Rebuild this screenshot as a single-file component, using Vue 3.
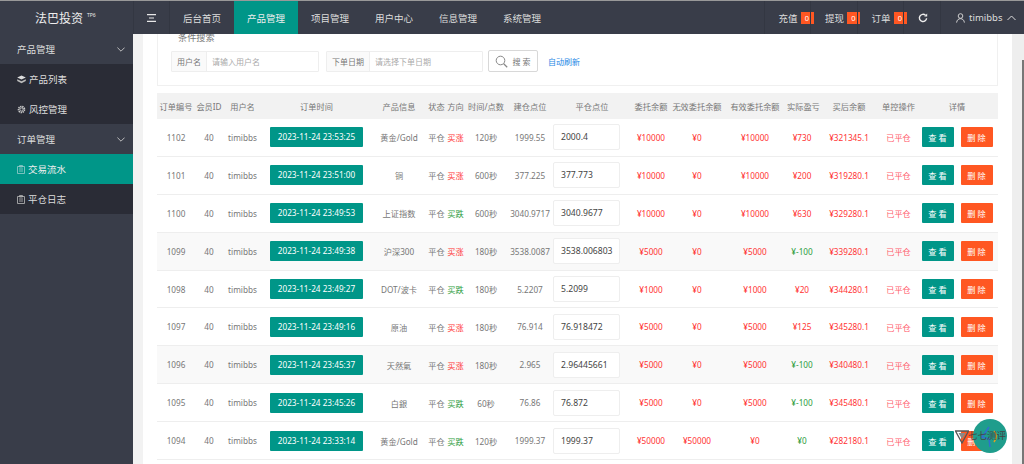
<script setup>
const rows = [
  { id: 1102, time: "2023-11-24 23:53:25", product: "黄金/Gold", dir: "买涨", dur: "120秒", open: "1999.55", close: "2000.4", entrust: "¥10000", invalid: "¥0", valid: "¥10000", profit: "¥730", after: "¥321345.1" },
  { id: 1101, time: "2023-11-24 23:51:00", product: "铜", dir: "买涨", dur: "600秒", open: "377.225", close: "377.773", entrust: "¥10000", invalid: "¥0", valid: "¥10000", profit: "¥200", after: "¥319280.1" },
  { id: 1100, time: "2023-11-24 23:49:53", product: "上证指数", dir: "买跌", dur: "600秒", open: "3040.9717", close: "3040.9677", entrust: "¥10000", invalid: "¥0", valid: "¥10000", profit: "¥630", after: "¥329280.1" },
  { id: 1099, time: "2023-11-24 23:49:38", product: "沪深300", dir: "买涨", dur: "180秒", open: "3538.0087", close: "3538.006803", entrust: "¥5000", invalid: "¥0", valid: "¥5000", profit: "¥-100", after: "¥339280.1", tint: true },
  { id: 1098, time: "2023-11-24 23:49:27", product: "DOT/波卡", dir: "买跌", dur: "180秒", open: "5.2207", close: "5.2099", entrust: "¥1000", invalid: "¥0", valid: "¥1000", profit: "¥20", after: "¥344280.1" },
  { id: 1097, time: "2023-11-24 23:49:16", product: "原油", dir: "买涨", dur: "180秒", open: "76.914", close: "76.918472", entrust: "¥5000", invalid: "¥0", valid: "¥5000", profit: "¥125", after: "¥345280.1" },
  { id: 1096, time: "2023-11-24 23:45:37", product: "天然氣", dir: "买涨", dur: "180秒", open: "2.965", close: "2.96445661", entrust: "¥5000", invalid: "¥0", valid: "¥5000", profit: "¥-100", after: "¥340480.1", tint: true },
  { id: 1095, time: "2023-11-24 23:45:26", product: "白銀", dir: "买跌", dur: "60秒", open: "76.86", close: "76.872", entrust: "¥5000", invalid: "¥0", valid: "¥5000", profit: "¥-100", after: "¥345480.1" },
  { id: 1094, time: "2023-11-24 23:33:14", product: "黄金/Gold", dir: "买跌", dur: "120秒", open: "1999.37", close: "1999.37", entrust: "¥50000", invalid: "¥50000", valid: "¥0", profit: "¥0", after: "¥282180.1" },
];

const navItems = ["后台首页", "产品管理", "项目管理", "用户中心", "信息管理", "系统管理"];
const counters = ["充值", "提现", "订单"];
const headers = ["订单编号", "会员ID", "用户名", "订单时间", "产品信息", "状态", "方向", "时间/点数", "建仓点位", "平仓点位", "委托余额", "无效委托余额", "有效委托余额", "实际盈亏", "买后余额", "单控操作", "详情"];
const colWidths = [38, 28, 39, 109, 56, 19, 19, 42, 46, 78, 40, 52, 64, 30, 64, 35, 82];

function isLoss(value) {
  return value.startsWith("¥-") || value === "¥0";
}
</script>

<template>
  <div class="page">
    <header class="topbar">
      <div class="logo">法巴投资 <sup>TP6</sup></div>
      <div class="menu-toggle">
        <svg width="9" height="8" viewBox="0 0 9 8"><path d="M0 .7h9M2 4h5M0 7.3h9" stroke="#e8e8e8" stroke-width="1.2" fill="none" /></svg>
      </div>
      <nav class="nav">
        <a v-for="(item, i) in navItems" :key="item" class="nav-item" :class="{ active: i === 1 }">{{ item }}</a>
      </nav>
      <div class="top-right">
        <div v-for="c in counters" :key="c" class="counter">
          <span>{{ c }}</span><span class="badge">0</span>
        </div>
        <div class="refresh">
          <svg width="10" height="10" viewBox="0 0 10 10"><path d="M8.6 5.2A3.6 3.6 0 1 1 7.5 2.3" stroke="#eee" stroke-width="1.4" fill="none" /><path d="M9.2 .6v3H6.2z" fill="#eee" /></svg>
        </div>
        <div class="user">
          <svg width="9" height="10" viewBox="0 0 9 10"><circle cx="4.5" cy="3" r="2.3" stroke="#ddd" stroke-width=".9" fill="none" /><path d="M.6 9.6c.3-2.6 1.8-3.9 3.9-3.9s3.6 1.3 3.9 3.9" stroke="#ddd" stroke-width=".9" fill="none" /></svg>
          <span>timibbs</span>
          <svg width="9" height="6" viewBox="0 0 9 6"><path d="M.5 5 4.5 1l4 4" stroke="#ddd" stroke-width="1" fill="none" /></svg>
        </div>
      </div>
    </header>

    <div class="body">
      <aside class="sidebar">
        <div class="side-group">
          产品管理
          <svg width="8" height="5" viewBox="0 0 8 5"><path d="M.4.6 4 4.2 7.6.6" stroke="#ccc" stroke-width=".9" fill="none" /></svg>
        </div>
        <div class="side-sub">
          <div class="side-link">
            <svg width="9" height="9" viewBox="0 0 9 9"><path d="M4.5.6 8.8 2.6 4.5 4.6.2 2.6z" fill="#ddd" /><path d="M.2 4.2 4.5 6.2 8.8 4.2V6L4.5 8.2.2 6z" fill="#bbb" /></svg>
            产品列表
          </div>
          <div class="side-link">
            <svg width="9" height="9" viewBox="0 0 9 9"><circle cx="4.5" cy="4.5" r="2.9" stroke="#ccc" stroke-width="1.8" stroke-dasharray="1.3 .7" fill="none" /><circle cx="4.5" cy="4.5" r="1.5" stroke="#ddd" stroke-width=".7" fill="none" /></svg>
            风控管理
          </div>
        </div>
        <div class="side-group">
          订单管理
          <svg width="8" height="5" viewBox="0 0 8 5"><path d="M.4.6 4 4.2 7.6.6" stroke="#ccc" stroke-width=".9" fill="none" /></svg>
        </div>
        <div class="side-sub">
          <div class="side-link current">
            <svg width="8" height="9" viewBox="0 0 8 9"><path d="M.5 1.5h7v7h-7zM2.5.5h3V2h-3zM2 4h4M2 6h4" stroke="#9cc" stroke-width=".8" fill="none" /></svg>
            交易流水
          </div>
          <div class="side-link">
            <svg width="8" height="9" viewBox="0 0 8 9"><path d="M.5 1.5h7v7h-7zM2.5.5h3V2h-3zM2 4h4M2 6h4" stroke="#bbb" stroke-width=".8" fill="none" /></svg>
            平仓日志
          </div>
        </div>
      </aside>

      <main class="main">
        <div class="content">
          <section class="search-card">
            <div class="search-title">条件搜索</div>
            <div class="search-row">
              <div class="field">
                <label class="field-label">用户名</label>
                <div class="field-input name-input">请输入用户名</div>
              </div>
              <div class="field">
                <label class="field-label">下单日期</label>
                <div class="field-input date-input">请选择下单日期</div>
              </div>
              <button type="button" class="search-btn">
                <svg width="13" height="13" viewBox="0 0 13 13"><circle cx="5.5" cy="5.5" r="4.3" stroke="#888" stroke-width="1" fill="none" /><path d="m8.7 8.7 3.5 3.5" stroke="#888" stroke-width="1.3" /></svg>
                搜 索
              </button>
              <a class="auto-refresh">自动刷新</a>
            </div>
          </section>

          <table class="orders">
            <colgroup>
              <col v-for="(w, i) in colWidths" :key="i" :style="{ width: w + 'px' }" />
            </colgroup>
            <thead>
              <tr>
                <th v-for="h in headers" :key="h">{{ h }}</th>
              </tr>
            </thead>
            <tbody>
              <tr v-for="row in rows" :key="row.id" :class="{ tint: row.tint }">
                <td>{{ row.id }}</td>
                <td>40</td>
                <td>timibbs</td>
                <td><span class="time-tag">{{ row.time }}</span></td>
                <td>{{ row.product }}</td>
                <td>平仓</td>
                <td :class="row.dir === '买涨' ? 'up' : 'down'">{{ row.dir }}</td>
                <td>{{ row.dur }}</td>
                <td>{{ row.open }}</td>
                <td class="close-cell"><div class="close-input">{{ row.close }}</div></td>
                <td class="money">{{ row.entrust }}</td>
                <td class="money">{{ row.invalid }}</td>
                <td class="money">{{ row.valid }}</td>
                <td :class="isLoss(row.profit) ? 'down' : 'money'">{{ row.profit }}</td>
                <td class="money">{{ row.after }}</td>
                <td class="closed">已平仓</td>
                <td class="actions">
                  <button type="button" class="btn btn-view">查 看</button>
                  <button type="button" class="btn btn-del">删 除</button>
                </td>
              </tr>
            </tbody>
          </table>
        </div>
        <div class="scrollbar"><div class="thumb"></div></div>
      </main>
    </div>

    <div class="watermark">
      <svg class="wm-logo" width="14" height="14" viewBox="0 0 14 14"><path d="M.5 1h13L7 13z" fill="none" stroke="#555" stroke-width="1.3" /><path d="M3.5 3h7L7 9z" fill="#888" /></svg>
      <div class="wm-circle">
        <svg width="34" height="34" viewBox="0 0 34 34"><path d="M16 8 9 18l7 2 1 8" stroke="#2f6fd0" stroke-width="1.5" fill="none" /><path d="M21 12c3 3 3 7 0 11" stroke="#e0a020" stroke-width="1.5" fill="none" /></svg>
      </div>
      <span class="wm-text">七七测评</span>
    </div>
  </div>
</template>

<style>
html,
body {
  margin: 0;
  overflow: hidden;
}
</style>

<style scoped>
.page {
  width: 1024px;
  height: 464px;
  position: relative;
  overflow: hidden;
  display: flex;
  flex-direction: column;
  font-family: "Noto Sans", "Noto Sans CJK SC", sans-serif;
  color: #777;
  background: #f2f2f2;
}

.topbar {
  height: 33px;
  flex-shrink: 0;
  display: flex;
  align-items: stretch;
  background: #393d49;
  border-top: 1px solid #999;
  color: #ddd;
  font-size: 9.5px;
}
.logo {
  width: 133px;
  flex-shrink: 0;
  box-sizing: border-box;
  padding-left: 35px;
  display: flex;
  align-items: center;
  gap: 4px;
  font-size: 12px;
  color: #eee;
}
.logo sup {
  font-size: 5px;
  position: relative;
  top: -2px;
  line-height: 1;
}
.menu-toggle {
  width: 37px;
  flex-shrink: 0;
  box-sizing: border-box;
  border-left: 1px solid #333742;
  border-right: 1px solid #333742;
  display: flex;
  align-items: center;
  justify-content: center;
}
.nav {
  display: flex;
}
.nav-item {
  width: 64px;
  display: flex;
  align-items: center;
  justify-content: center;
}
.nav-item.active {
  background: #009688;
  color: #eee;
}
.top-right {
  margin-left: auto;
  display: flex;
  align-items: stretch;
}
.counter {
  width: 46.5px;
  box-sizing: border-box;
  padding-left: 14px;
  border-left: 1px solid #333742;
  display: flex;
  align-items: center;
  gap: 3px;
  white-space: nowrap;
}
.badge {
  width: 13px;
  height: 12px;
  flex-shrink: 0;
  background: #ff5722;
  color: #fff;
  font-size: 7.5px;
  line-height: 12px;
  text-align: center;
}
.refresh {
  width: 37px;
  box-sizing: border-box;
  padding-left: 14px;
  border-left: 1px solid #333742;
  display: flex;
  align-items: center;
}
.user {
  width: 84px;
  box-sizing: border-box;
  padding-left: 15px;
  border-left: 1px solid #333742;
  display: flex;
  align-items: center;
  gap: 4px;
}
.user svg:last-child {
  margin-left: 1px;
}

.body {
  flex: 1;
  min-height: 0;
  display: flex;
}
.sidebar {
  width: 133px;
  flex-shrink: 0;
  background: #393d49;
  color: #ddd;
  font-size: 9.5px;
}
.side-group {
  height: 30px;
  box-sizing: border-box;
  padding: 0 8px 0 17px;
  display: flex;
  align-items: center;
  justify-content: space-between;
}
.side-sub {
  background: #2a2c36;
}
.side-link {
  height: 30px;
  box-sizing: border-box;
  padding-left: 17px;
  display: flex;
  align-items: center;
  gap: 3px;
}
.side-link.current {
  background: #009688;
  color: #eee;
}

.main {
  flex: 1;
  min-width: 0;
  display: flex;
  padding-left: 10px;
}
.content {
  flex: 1;
  min-width: 0;
  background: #fff;
  padding: 0 14px;
  overflow: hidden;
}
.search-card {
  margin-top: -4px;
  height: 55px;
  padding-left: 13px;
  border: 1px solid #f0f0f0;
  border-top: 0;
}
.search-title {
  height: 14px;
  padding-left: 7px;
  font-size: 9.2px;
  line-height: 15px;
  color: #777;
}
.search-row {
  margin-top: 6px;
  display: flex;
  align-items: center;
  gap: 7px;
  font-size: 8px;
}
.field {
  display: flex;
  height: 21px;
  box-sizing: border-box;
  border: 1px solid #eee;
  border-radius: 1px;
}
.field-label {
  padding: 0 5px;
  background: #fafafa;
  border-right: 1px solid #eee;
  line-height: 19px;
  color: #777;
}
.field-input {
  padding-left: 5px;
  line-height: 19px;
  color: #aaa;
}
.name-input {
  width: 106px;
}
.date-input {
  width: 107px;
}
.search-btn {
  width: 50px;
  height: 22px;
  margin-left: -2px;
  padding: 0;
  background: #fff;
  border: 1px solid #d8d8d8;
  border-radius: 2px;
  color: #777;
  font: inherit;
  display: flex;
  align-items: center;
  justify-content: center;
  gap: 4px;
}
.auto-refresh {
  margin-left: 3px;
  color: #1e88e5;
}

.orders {
  margin-top: 7px;
  width: 841px;
  table-layout: fixed;
  border-collapse: collapse;
  font-size: 8.2px;
  text-align: center;
}
.orders th {
  height: 26px;
  padding: 0;
  background: #f2f2f2;
  font-weight: 400;
  color: #777;
  white-space: nowrap;
}
.orders td {
  height: 36.9px;
  padding: 0;
  border-bottom: 1px solid #eee;
  white-space: nowrap;
}
.orders tr.tint td {
  background: #f9f9f9;
}
.time-tag {
  display: block;
  width: 93px;
  height: 20px;
  margin: 0 auto;
  background: #009688;
  border-radius: 1px;
  color: #fff;
  line-height: 20px;
}
.close-cell {
  text-align: left;
}
.close-input {
  width: 67px;
  height: 26px;
  box-sizing: border-box;
  padding-left: 7px;
  background: #fff;
  border: 1px solid #eee;
  border-radius: 2px;
  line-height: 24px;
  font-size: 8.6px;
  color: #444;
}
.money {
  color: #f33;
}
.up {
  color: #f33;
}
.down {
  color: #2e9e3e;
}
.closed {
  color: #ff5c6c;
}
.actions {
  text-align: center;
}
.btn {
  width: 32px;
  height: 20px;
  padding: 0;
  border: 0;
  border-radius: 1px;
  color: #fff;
  font: inherit;
  vertical-align: middle;
}
.btn + .btn {
  margin-left: 7px;
}
.btn-view {
  background: #009688;
}
.btn-del {
  background: #ff5722;
}

.scrollbar {
  width: 12px;
  flex-shrink: 0;
  background: #eee;
  display: flex;
  justify-content: flex-end;
}
.thumb {
  width: 2px;
  margin-top: 26px;
  background: #777;
}

.watermark {
  position: absolute;
  left: 955px;
  top: 419px;
  width: 55px;
  height: 35px;
}
.wm-circle {
  position: absolute;
  left: 18px;
  top: 0;
  width: 34px;
  height: 34px;
  border-radius: 50%;
  background: #1f9d8c;
}
.wm-logo {
  position: absolute;
  left: 0;
  top: 11px;
}
.wm-text {
  position: absolute;
  left: 13px;
  top: 9px;
  font-size: 9.5px;
  line-height: 16px;
  color: #444;
  white-space: nowrap;
}
</style>
